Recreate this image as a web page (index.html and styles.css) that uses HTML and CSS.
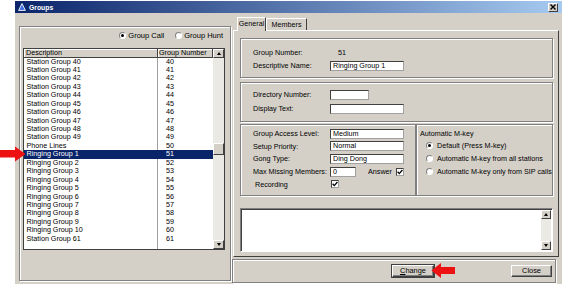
FILE: index.html
```html
<!DOCTYPE html>
<html lang="en">
<head>
    <meta charset="UTF-8">
    <title>Groups</title>
    <link rel="stylesheet" href="styles.css">
</head>
<body>
    <div class="window">
        <div class="titlebar">
            <svg class="title-icon" width="8" height="8" viewBox="0 0 8 8"><polygon points="4,0.6 7.4,7.4 0.6,7.4" fill="#3b6fe0" stroke="#fff" stroke-width="0.9"/></svg>
            <span class="title-text">Groups</span>
            <span class="close-btn"><svg width="6" height="6" viewBox="0 0 6 6"><path d="M0.5 0.5 L5.5 5.5 M5.5 0.5 L0.5 5.5" stroke="#000" stroke-width="1.4"/></svg></span>
        </div>

        <div class="main">
            <div class="left-box">
                <div class="mode-row">
                    <span class="radio on"></span><span class="opt opt-call">Group Call</span>
                    <span class="radio"></span><span class="opt">Group Hunt</span>
                </div>
                <div class="list">
                    <div class="list-body">
                        <div class="list-head"><span class="hd-desc">Description</span><span class="hd-num">Group Number</span></div>
                        <div class="row"><span class="c-desc">Station Group 40</span><span class="c-num">40</span></div>
                        <div class="row"><span class="c-desc">Station Group 41</span><span class="c-num">41</span></div>
                        <div class="row"><span class="c-desc">Station Group 42</span><span class="c-num">42</span></div>
                        <div class="row"><span class="c-desc">Station Group 43</span><span class="c-num">43</span></div>
                        <div class="row"><span class="c-desc">Station Group 44</span><span class="c-num">44</span></div>
                        <div class="row"><span class="c-desc">Station Group 45</span><span class="c-num">45</span></div>
                        <div class="row"><span class="c-desc">Station Group 46</span><span class="c-num">46</span></div>
                        <div class="row"><span class="c-desc">Station Group 47</span><span class="c-num">47</span></div>
                        <div class="row"><span class="c-desc">Station Group 48</span><span class="c-num">48</span></div>
                        <div class="row"><span class="c-desc">Station Group 49</span><span class="c-num">49</span></div>
                        <div class="row"><span class="c-desc">Phone Lines</span><span class="c-num">50</span></div>
                        <div class="row selected"><span class="c-desc">Ringing Group 1</span><span class="c-num">51</span></div>
                        <div class="row"><span class="c-desc">Ringing Group 2</span><span class="c-num">52</span></div>
                        <div class="row"><span class="c-desc">Ringing Group 3</span><span class="c-num">53</span></div>
                        <div class="row"><span class="c-desc">Ringing Group 4</span><span class="c-num">54</span></div>
                        <div class="row"><span class="c-desc">Ringing Group 5</span><span class="c-num">55</span></div>
                        <div class="row"><span class="c-desc">Ringing Group 6</span><span class="c-num">56</span></div>
                        <div class="row"><span class="c-desc">Ringing Group 7</span><span class="c-num">57</span></div>
                        <div class="row"><span class="c-desc">Ringing Group 8</span><span class="c-num">58</span></div>
                        <div class="row"><span class="c-desc">Ringing Group 9</span><span class="c-num">59</span></div>
                        <div class="row"><span class="c-desc">Ringing Group 10</span><span class="c-num">60</span></div>
                        <div class="row"><span class="c-desc">Station Group 61</span><span class="c-num">61</span></div>
                    </div>
                    <div class="vscroll">
                        <span class="sbtn"><span class="tri-up"></span></span>
                        <span class="track"><span class="thumb"></span></span>
                        <span class="sbtn"><span class="tri-down"></span></span>
                    </div>
                </div>
            </div>

            <div class="right">
                <div class="tabs">
                    <span class="tab active">General</span>
                    <span class="tab">Members</span>
                </div>
                <div class="page">
                    <div class="group g1">
                        <span class="lbl">Group Number:</span><span class="val">51</span>
                        <span class="lbl">Descriptive Name:</span><span class="field w-long">Ringing Group 1</span>
                    </div>
                    <div class="group g2">
                        <span class="lbl">Directory Number:</span><span class="field w-mid"></span>
                        <span class="lbl">Display Text:</span><span class="field w-long"></span>
                    </div>
                    <div class="g3">
                        <div class="group g3-left">
                            <span class="lbl">Group Access Level:</span><span class="field w-long">Medium</span>
                            <span class="lbl">Setup Priority:</span><span class="field w-long">Normal</span>
                            <span class="lbl">Gong Type:</span><span class="field w-long">Ding Dong</span>
                            <span class="lbl">Max Missing Members:</span>
                            <span class="answer-row"><span class="field w-short">0</span><span class="answer">Answer</span><span class="check"><svg width="6" height="6" viewBox="0 0 6 6"><path d="M0.6 2.8 L2.3 4.6 L5.4 1" fill="none" stroke="#000" stroke-width="1.3"/></svg></span></span>
                            <span class="lbl rec">Recording</span><span class="check"><svg width="6" height="6" viewBox="0 0 6 6"><path d="M0.6 2.8 L2.3 4.6 L5.4 1" fill="none" stroke="#000" stroke-width="1.3"/></svg></span>
                        </div>
                        <div class="group g3-right">
                            <div class="mkey-title">Automatic M-key</div>
                            <div class="mkey-opt"><span class="radio on"></span><span>Default (Press M-key)</span></div>
                            <div class="mkey-opt"><span class="radio"></span><span>Automatic M-key from all stations</span></div>
                            <div class="mkey-opt"><span class="radio"></span><span>Automatic M-key only from SIP calls</span></div>
                        </div>
                    </div>
                    <div class="memo">
                        <div class="memo-text"></div>
                        <div class="memo-scroll">
                            <span class="sbtn"><span class="tri-up"></span></span>
                            <span class="track"></span>
                            <span class="sbtn"><span class="tri-down"></span></span>
                        </div>
                    </div>
                </div>
                <div class="button-bar">
                    <span class="btn btn-default"><u>C</u>hange</span>
                    <span class="btn">Close</span>
                </div>
            </div>
        </div>
    </div>

    <svg class="arrow arrow-list" width="26" height="16" viewBox="0 0 26 16"><polygon points="0,4 15,4 15,0.5 25.5,8 15,15.5 15,11.5 0,11.5" fill="#ee1111"/></svg>
    <svg class="arrow arrow-change" width="25" height="17" viewBox="0 0 25 17"><polygon points="0.5,8.5 10,1 10,5 24,5 24,12 10,12 10,16" fill="#ee1111"/></svg>
</body>
</html>
```

FILE: styles.css
```css
body {
    margin: 0;
    background: #fff;
    font-family: "Liberation Sans", Arial, sans-serif;
    font-size: 7.2px;
    color: #000;
    position: relative;
    height: 286px;
    overflow: hidden;
}
.window {
    margin: 1px 0 0 15px;
    width: 547px;
    height: 283px;
    background: #d4d0c8;
}
.titlebar {
    height: 12px;
    display: flex;
    align-items: center;
    padding: 0 4px 0 3px;
    background: linear-gradient(to right, #0a246a, #a6caf0);
    color: #fff;
}
.title-icon {
    display: block;
}
.title-text {
    margin-left: 3px;
    font-weight: bold;
    font-size: 6.8px;
}
.close-btn {
    margin-left: auto;
    width: 10px;
    height: 9px;
    box-sizing: border-box;
    background: #d4d0c8;
    border: 1px solid;
    border-color: #fff #404040 #404040 #fff;
    display: flex;
    align-items: center;
    justify-content: center;
}
.close-btn svg {
    display: block;
}
.main {
    display: flex;
    height: 271px;
}

/* etched frames */
.left-box,
.group,
.button-bar {
    box-sizing: border-box;
    border: 1px solid #808080;
    box-shadow: inset 1px 1px 0 #fff, 1px 1px 0 #fff;
}

/* left side */
.left-box {
    margin: 13px 0 0 4px;
    width: 212px;
    height: 255px;
}
.mode-row {
    margin-top: 3px;
    height: 11px;
    display: flex;
    align-items: center;
    justify-content: flex-end;
    padding-right: 7px;
    font-size: 7.5px;
}
.mode-row .opt {
    margin-left: 2px;
}
.mode-row .opt-call {
    margin-right: 11px;
}
.radio {
    width: 7px;
    height: 7px;
    box-sizing: border-box;
    border-radius: 50%;
    border: 1px solid;
    border-color: #808080 #fff #fff #808080;
    background: #fff;
    display: inline-flex;
    align-items: center;
    justify-content: center;
    flex: none;
}
.radio.on::after {
    content: "";
    width: 3px;
    height: 3px;
    border-radius: 50%;
    background: #000;
}
.list {
    margin: 7px 0 0 3px;
    width: 202px;
    height: 202px;
    box-sizing: border-box;
    border: 1px solid #404040;
    display: flex;
    background: #fff;
}
.list-body {
    width: 189px;
    background: linear-gradient(#a0a0a0, #a0a0a0) no-repeat 133px 0 / 1px 100%, #fff;
}
.list-head {
    display: flex;
    height: 8.5px;
    line-height: 8.5px;
}
.hd-desc,
.hd-num {
    box-sizing: border-box;
    background: #d4d0c8;
    border-bottom: 1px solid #404040;
    border-right: 1px solid #404040;
    box-shadow: inset 1px 1px 0 #fff;
}
.hd-desc {
    width: 134px;
    padding-left: 2px;
}
.hd-num {
    width: 55px;
    padding-left: 1px;
}
.row {
    display: flex;
    height: 8.45px;
    line-height: 8.45px;
}
.c-desc {
    width: 134px;
    padding-left: 2.5px;
    box-sizing: border-box;
}
.c-num {
    padding-left: 8px;
}
.row.selected {
    background: #0a246a;
    color: #fff;
}
.vscroll {
    width: 11px;
    display: flex;
    flex-direction: column;
}
.sbtn {
    height: 9px;
    box-sizing: border-box;
    background: #d4d0c8;
    border: 1px solid;
    border-color: #fff #404040 #404040 #fff;
    display: flex;
    align-items: center;
    justify-content: center;
    flex: none;
}
.tri-up {
    border-left: 2.5px solid transparent;
    border-right: 2.5px solid transparent;
    border-bottom: 3px solid #000;
}
.tri-down {
    border-left: 2.5px solid transparent;
    border-right: 2.5px solid transparent;
    border-top: 3px solid #000;
}
.track {
    flex: 1;
    background: #ebe9e4;
}
.thumb {
    display: block;
    margin-top: 85px;
    height: 12px;
    box-sizing: border-box;
    background: #d4d0c8;
    border: 1px solid;
    border-color: #fff #404040 #404040 #fff;
}

/* right side */
.right {
    margin-left: 1px;
    width: 327px;
}
.tabs {
    margin-top: 3px;
    height: 14px;
    display: flex;
    align-items: flex-end;
    padding-left: 5px;
}
.tab {
    height: 12px;
    box-sizing: border-box;
    border: 1px solid;
    border-color: #fff #404040 transparent #fff;
    border-bottom: none;
    line-height: 11px;
    text-align: center;
}
.tab.active {
    width: 29px;
    height: 14px;
    line-height: 12px;
    position: relative;
    top: 1px;
    background: #d4d0c8;
    z-index: 1;
}
.tab:not(.active) {
    width: 41px;
}
.page {
    margin-left: 1px;
    width: 326px;
    height: 227px;
    box-sizing: border-box;
    border: 1px solid;
    border-color: #fff #404040 #404040 #fff;
    padding: 7px 5px 0 6px;
}
.g1,
.g2,
.g3-left {
    display: grid;
    grid-template-columns: 77px auto;
    grid-auto-rows: 11px;
    row-gap: 2px;
    align-items: center;
    justify-items: start;
    padding-left: 12px;
}
.g1 {
    height: 40px;
    padding-top: 8px;
}
.g2 {
    margin-top: 4px;
    height: 40px;
    padding-top: 6px;
    row-gap: 3px;
}
.g3 {
    margin-top: 2px;
    height: 72px;
    display: flex;
}
.g3-left {
    width: 176px;
    padding-top: 3px;
    row-gap: 1.7px;
}
.g3-right {
    flex: 1;
    padding: 4px 0 0 3px;
    overflow: hidden;
    white-space: nowrap;
}
.val {
    padding-left: 8px;
}
.field {
    box-sizing: border-box;
    height: 10px;
    line-height: 8px;
    padding-left: 2px;
    background: #fff;
    border: 1px solid;
    border-color: #404040 #a0a0a0 #a0a0a0 #404040;
}
.w-long {
    width: 74px;
}
.w-mid {
    width: 39px;
}
.w-short {
    width: 26px;
}
.answer-row {
    display: flex;
    align-items: center;
}
.answer {
    margin-left: 12px;
    margin-right: 3px;
}
.check {
    width: 8px;
    height: 8px;
    box-sizing: border-box;
    background: #fff;
    border: 1px solid;
    border-color: #404040 #a0a0a0 #a0a0a0 #404040;
    display: flex;
    align-items: center;
    justify-content: center;
}
.check svg {
    display: block;
}
.lbl.rec {
    padding-left: 2px;
}
.g3-left .check {
    margin-left: 1px;
}
.mkey-title {
    height: 10px;
    line-height: 10px;
}
.mkey-opt {
    display: flex;
    align-items: center;
    gap: 4px;
    height: 13px;
    padding-left: 6px;
}
.memo {
    margin-top: 12px;
    height: 44px;
    box-sizing: border-box;
    border: 1px solid;
    border-color: #808080 #fff #fff #808080;
    box-shadow: inset 1px 1px 0 #404040;
    background: #fff;
    display: flex;
    padding: 1px;
}
.memo-text {
    flex: 1;
}
.memo-scroll {
    width: 10px;
    display: flex;
    flex-direction: column;
}
.button-bar {
    margin-top: 2px;
    width: 324px;
    height: 24px;
    display: flex;
    align-items: center;
    justify-content: flex-end;
    gap: 77px;
    padding-right: 3px;
}
.btn {
    height: 12px;
    box-sizing: border-box;
    width: 41px;
    border: 1px solid;
    border-color: #fff #404040 #404040 #fff;
    box-shadow: inset -1px -1px 0 #808080;
    text-align: center;
    line-height: 10px;
    font-size: 7.4px;
}
.btn-default {
    width: 42px;
    outline: 1px solid #404040;
}

/* red pointer arrows drawn over the screenshot */
.arrow {
    position: absolute;
    display: block;
}
.arrow-list {
    left: 0;
    top: 146px;
}
.arrow-change {
    left: 431px;
    top: 262px;
}
```
